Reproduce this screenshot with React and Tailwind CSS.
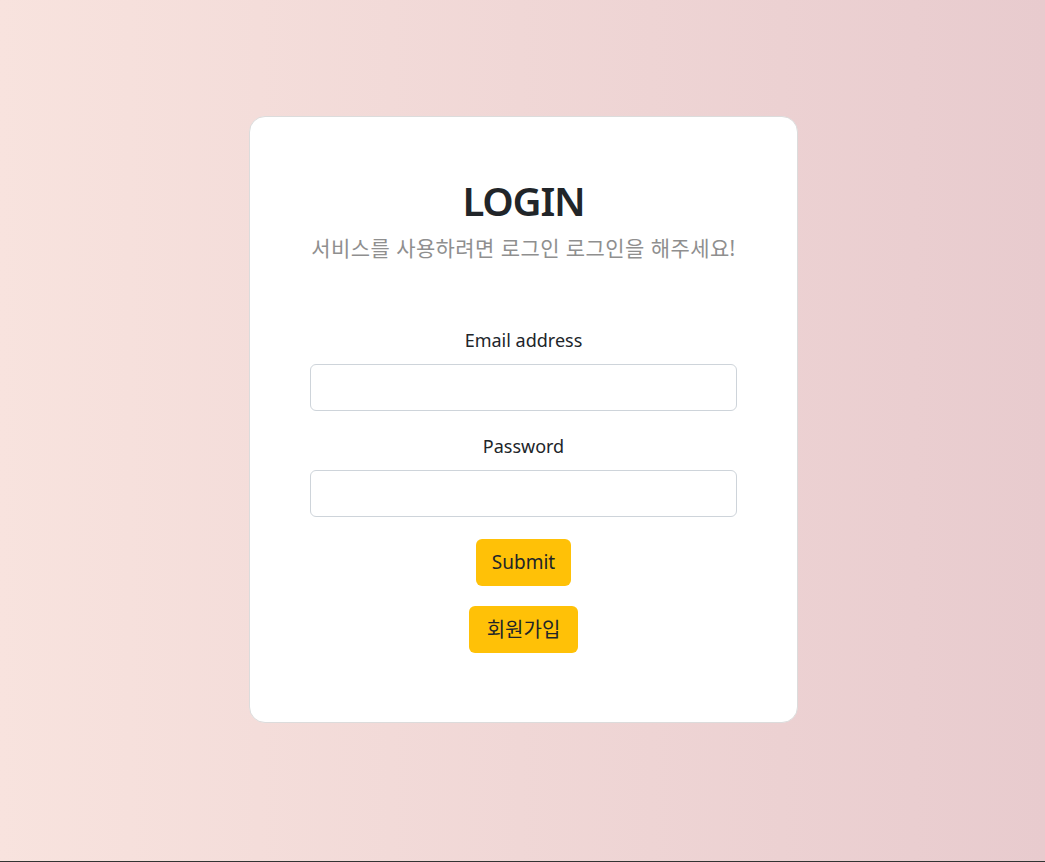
import { useState } from 'react';

const App = () => {
  const [email, setEmail] = useState('');
  const [password, setPassword] = useState('');

  return (
    <div
      className="min-h-[862px] flex flex-col bg-gradient-to-r from-[#f8e3de] to-[#e8cbce] text-[#212529]"
      style={{ fontFamily: '"Noto Sans", "Noto Sans CJK KR", sans-serif' }}
    >
      <div className="flex-1 flex justify-center pt-[116px] pl-[2px]">
        <div className="w-[549px] h-[607px] bg-white rounded-2xl border border-[#dcdcdc] px-[60px] pt-[60px]">
          <h1 className="text-[40px] leading-[48px] font-semibold tracking-[-0.03em] text-center text-[#212529]">LOGIN</h1>
          <p className="mt-[10px] text-[21px] leading-[27px] tracking-[0.02em] text-center text-[#8f8f8f]">
            서비스를 사용하려면 로그인 로그인을 해주세요!
          </p>

          <form className="mt-[65px] flex flex-col items-center" onSubmit={(e) => e.preventDefault()}>
            <label className="text-[18px] leading-[27px]">Email address</label>
            <input
              type="email"
              value={email}
              onChange={(e) => setEmail(e.target.value)}
              className="mt-[10px] w-full h-[47px] px-4 rounded-md border border-[#ced4da] outline-none text-[18px]"
            />
            <label className="mt-[22px] text-[18px] leading-[27px]">Password</label>
            <input
              type="password"
              value={password}
              onChange={(e) => setPassword(e.target.value)}
              className="mt-[10px] w-full h-[47px] px-4 rounded-md border border-[#ced4da] outline-none text-[18px]"
            />
            <button
              type="submit"
              className="mt-[22px] h-[47px] px-4 rounded-md bg-[#ffc107] text-[19px] text-[#212529]"
            >
              Submit
            </button>
            <button
              type="button"
              className="mt-[20px] h-[47px] px-[18px] rounded-md bg-[#ffc107] text-[20px] text-[#212529]"
            >
              회원가입
            </button>
          </form>
        </div>
      </div>
      <div className="h-px bg-[#333333]" />
    </div>
  );
};

export default App;
